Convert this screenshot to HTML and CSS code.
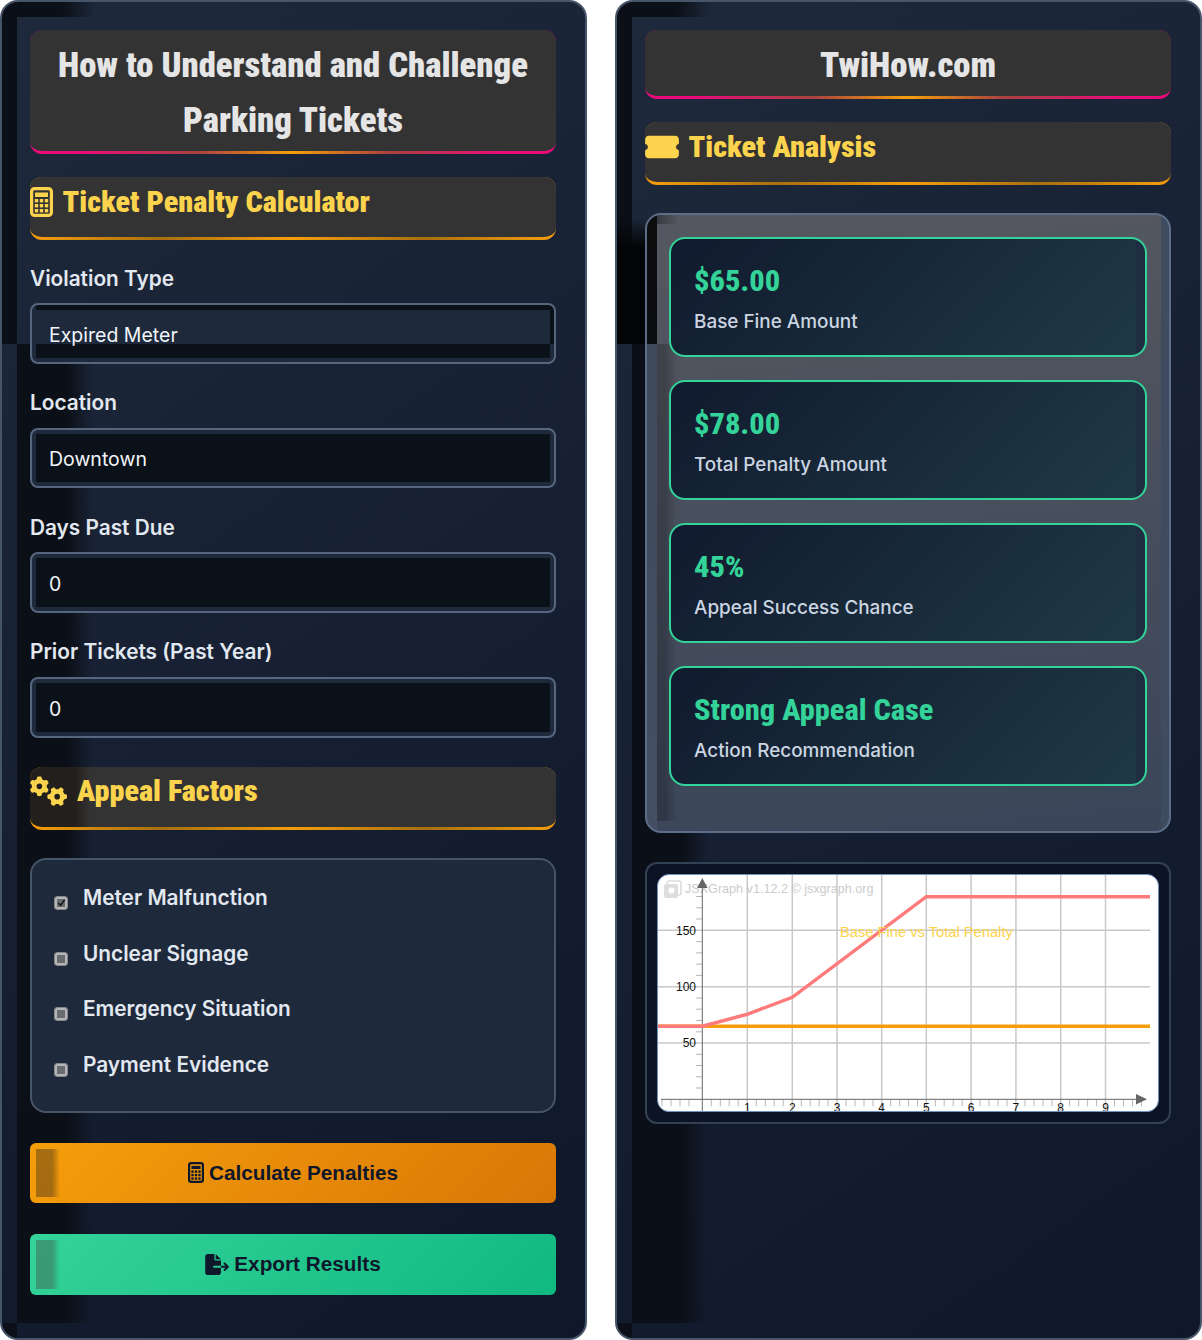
FILE: index.html
```html
<!DOCTYPE html>
<html lang="en">
<head>
<meta charset="utf-8">
<title>How to Understand and Challenge Parking Tickets</title>
<link rel="stylesheet" href="styles.css">
</head>
<body>
<main class="layout">
  <section class="panel">
    <h1 class="title">How to Understand and Challenge Parking Tickets</h1>
    <h2 class="heading">
      <svg class="ico-calc" viewBox="0 0 23 30"><rect x="1.6" y="1.6" width="19.8" height="26.8" rx="3" fill="none" stroke="currentColor" stroke-width="3.2"/><rect x="5" y="5.5" width="13" height="4.5" fill="currentColor"/><g fill="currentColor"><rect x="4.8" y="12" width="3.4" height="3.4"/><rect x="9.8" y="12" width="3.4" height="3.4"/><rect x="14.8" y="12" width="3.4" height="3.4"/><rect x="4.8" y="17" width="3.4" height="3.4"/><rect x="9.8" y="17" width="3.4" height="3.4"/><rect x="14.8" y="17" width="3.4" height="3.4"/><rect x="4.8" y="22" width="3.4" height="3.4"/><rect x="9.8" y="22" width="3.4" height="3.4"/><rect x="14.8" y="22" width="3.4" height="3.4"/></g></svg>
      <span>Ticket Penalty Calculator</span>
    </h2>
    <label class="label first">Violation Type</label>
    <select class="control control-split"><option>Expired Meter</option></select>
    <label class="label">Location</label>
    <select class="control"><option>Downtown</option></select>
    <label class="label">Days Past Due</label>
    <input class="control" value="0">
    <label class="label">Prior Tickets (Past Year)</label>
    <input class="control" value="0">
    <h2 class="heading heading-shaded">
      <svg class="ico-cogs" viewBox="0 0 640 512"><path fill="currentColor" d="M308.5 135.3c7.1-6.3 9.9-16.2 6.2-25c-2.3-5.3-4.8-10.5-7.6-15.5L304 89.4c-3-5-6.3-9.9-9.8-14.6c-5.7-7.6-15.7-10.1-24.7-7.1l-28.2 9.3c-10.7-8.8-23-16-36.2-20.9L199 27.1c-1.9-9.3-9.1-16.7-18.5-17.8C173.9 8.4 167.2 8 160.4 8h-.7c-6.8 0-13.5 .4-20.1 1.2c-9.4 1.1-16.6 8.6-18.5 17.8L115 56.1c-13.3 5-25.5 12.1-36.2 20.9L50.5 67.8c-9-3-19-.5-24.7 7.1c-3.5 4.7-6.8 9.6-9.9 14.6l-3 5.3c-2.8 5-5.3 10.2-7.6 15.6c-3.7 8.7-.9 18.6 6.2 25l22.2 19.8C32.6 161.9 32 168.9 32 176s.6 14.1 1.7 20.9L11.5 216.7c-7.1 6.3-9.9 16.2-6.2 25c2.3 5.3 4.8 10.5 7.6 15.6l3 5.2c3 5.1 6.3 9.9 9.9 14.6c5.7 7.6 15.7 10.1 24.7 7.1l28.2-9.3c10.7 8.8 23 16 36.2 20.9l6.1 29.1c1.9 9.3 9.1 16.7 18.5 17.8c6.7 .8 13.5 1.2 20.4 1.2s13.7-.4 20.4-1.2c9.4-1.1 16.6-8.6 18.5-17.8l6.1-29.1c13.3-5 25.5-12.1 36.2-20.9l28.2 9.3c9 3 19 .5 24.7-7.1c3.5-4.7 6.8-9.5 9.8-14.6l3.1-5.4c2.8-5 5.3-10.2 7.6-15.5c3.7-8.7 .9-18.6-6.2-25l-22.2-19.8c1.1-6.8 1.7-13.8 1.7-20.9s-.6-14.1-1.7-20.9l22.2-19.8zM112 176a48 48 0 1 1 96 0 48 48 0 1 1 -96 0zM504.7 500.5c6.3 7.1 16.2 9.9 25 6.2c5.3-2.3 10.5-4.8 15.5-7.6l5.4-3.1c5-3 9.9-6.3 14.6-9.8c7.6-5.7 10.1-15.7 7.1-24.7l-9.3-28.2c8.8-10.7 16-23 20.9-36.2l29.1-6.1c9.3-1.9 16.7-9.1 17.8-18.5c.8-6.7 1.2-13.5 1.2-20.4s-.4-13.7-1.2-20.4c-1.1-9.4-8.6-16.6-17.8-18.5L583.9 307c-5-13.3-12.1-25.5-20.9-36.2l9.3-28.2c3-9 .5-19-7.1-24.7c-4.7-3.5-9.6-6.8-14.6-9.9l-5.3-3c-5-2.8-10.2-5.3-15.6-7.6c-8.7-3.7-18.6-.9-25 6.2l-19.8 22.2c-6.8-1.1-13.8-1.7-20.9-1.7s-14.1 .6-20.9 1.7l-19.8-22.2c-6.3-7.1-16.2-9.9-25-6.2c-5.3 2.3-10.5 4.8-15.6 7.6l-5.2 3c-5.1 3-9.9 6.3-14.6 9.9c-7.6 5.7-10.1 15.7-7.1 24.7l9.3 28.2c-8.8 10.7-16 23-20.9 36.2L315.1 313c-9.3 1.9-16.7 9.1-17.8 18.5c-.8 6.7-1.2 13.5-1.2 20.4s.4 13.7 1.2 20.4c1.1 9.4 8.6 16.6 17.8 18.5l29.1 6.1c5 13.3 12.1 25.5 20.9 36.2l-9.3 28.2c-3 9-.5 19 7.1 24.7c4.7 3.5 9.5 6.8 14.6 9.8l5.4 3.1c5 2.8 10.2 5.3 15.5 7.6c8.7 3.7 18.6 .9 25-6.2l19.8-22.2c6.8 1.1 13.8 1.7 20.9 1.7s14.1-.6 20.9-1.7l19.8 22.2zM464 304a48 48 0 1 1 0 96 48 48 0 1 1 0-96z"/></svg>
      <span>Appeal Factors</span>
    </h2>
    <div class="factors">
      <label class="factor"><span class="check"><svg viewBox="0 0 10 10"><path d="M1.5 5.5 4 8 8.5 2" fill="none" stroke="#1a1a1a" stroke-width="1.8"/></svg></span>Meter Malfunction</label>
      <label class="factor"><span class="check"></span>Unclear Signage</label>
      <label class="factor"><span class="check"></span>Emergency Situation</label>
      <label class="factor"><span class="check"></span>Payment Evidence</label>
    </div>
    <button class="btn btn-orange">
      <svg class="ico-btn-calc" viewBox="0 0 23 30"><rect x="1.6" y="1.6" width="19.8" height="26.8" rx="3" fill="none" stroke="currentColor" stroke-width="3.2"/><rect x="5" y="5.5" width="13" height="4.5" fill="currentColor"/><g fill="currentColor"><rect x="4.8" y="12" width="3.4" height="3.4"/><rect x="9.8" y="12" width="3.4" height="3.4"/><rect x="14.8" y="12" width="3.4" height="3.4"/><rect x="4.8" y="17" width="3.4" height="3.4"/><rect x="9.8" y="17" width="3.4" height="3.4"/><rect x="14.8" y="17" width="3.4" height="3.4"/><rect x="4.8" y="22" width="3.4" height="3.4"/><rect x="9.8" y="22" width="3.4" height="3.4"/><rect x="14.8" y="22" width="3.4" height="3.4"/></g></svg>
      Calculate Penalties
    </button>
    <button class="btn btn-green">
      <svg class="ico-export" viewBox="0 0 576 512"><path fill="currentColor" d="M0 64C0 28.7 28.7 0 64 0H224V128c0 17.7 14.3 32 32 32H384V288H216c-13.3 0-24 10.7-24 24s10.7 24 24 24H384V448c0 35.3-28.7 64-64 64H64c-35.3 0-64-28.7-64-64V64zM384 336V288H494.1l-39-39c-9.4-9.4-9.4-24.6 0-33.9s24.6-9.4 33.9 0l80 80c9.4 9.4 9.4 24.6 0 33.9l-80 80c-9.4 9.4-24.6 9.4-33.9 0s-9.4-24.6 0-33.9l39-39H384zm0-208H256V0L384 128z"/></svg>
      Export Results
    </button>
  </section>

  <section class="panel panel-right">
    <h1 class="title">TwiHow.com</h1>
    <h2 class="heading">
      <svg class="ico-ticket" viewBox="0 0 576 512"><path fill="currentColor" d="M64 64C28.7 64 0 92.7 0 128v64c0 8.8 7.4 15.7 15.7 18.6C34.5 217.1 48 235 48 256s-13.5 38.9-32.3 45.4C7.4 304.3 0 311.2 0 320v64c0 35.3 28.7 64 64 64H512c35.3 0 64-28.7 64-64V320c0-8.8-7.4-15.7-15.7-18.6C541.5 294.9 528 277 528 256s13.5-38.9 32.3-45.4c8.3-2.9 15.7-9.8 15.7-18.6V128c0-35.3-28.7-64-64-64H64z"/></svg>
      <span>Ticket Analysis</span>
    </h2>
    <div class="results">
      <article class="result"><div class="value">$65.00</div><div class="caption">Base Fine Amount</div></article>
      <article class="result"><div class="value">$78.00</div><div class="caption">Total Penalty Amount</div></article>
      <article class="result"><div class="value">45%</div><div class="caption">Appeal Success Chance</div></article>
      <article class="result"><div class="value">Strong Appeal Case</div><div class="caption">Action Recommendation</div></article>
    </div>
    <div class="chart">
      <svg class="board" viewBox="1 1 500 236">
        <g class="wm"><rect x="10" y="7" width="14" height="14" rx="2" fill="none" stroke="#ddd" stroke-width="1.6"/><rect x="7" y="10" width="14" height="14" rx="2" fill="#ddd"/><circle cx="14.5" cy="16.5" r="3" fill="#fff"/><text x="28" y="19">JSXGraph v1.12.2 © jsxgraph.org</text></g>
        <g class="grid">
          <path d="M0 56.3H493M0 112.7H493M0 169H493"/>
          <path d="M90.3 0V238M135.3 0V238M180 0V238M224.7 0V238M269.3 0V238M314.1 0V238M358.9 0V238M403.7 0V238M448.5 0V238"/>
        </g>
        <g class="ticks">
          <path d="M39 22.5h6M39 33.8h6M39 45h6M39 67.6h6M39 78.9h6M39 90.2h6M39 101.4h6M39 124h6M39 135.2h6M39 146.5h6M39 157.8h6M39 180.3h6M39 191.5h6M39 202.8h6M39 214h6"/>
          <path d="M5 225.3v7M14 225.3v7M23 225.3v7M32 225.3v7M54.3 225.3v7M63.3 225.3v7M72.2 225.3v7M81.2 225.3v7M99.3 225.3v7M108.3 225.3v7M117.2 225.3v7M126.2 225.3v7M144.3 225.3v7M153.2 225.3v7M162.2 225.3v7M171 225.3v7M189 225.3v7M198 225.3v7M207 225.3v7M216 225.3v7M233.7 225.3v7M242.7 225.3v7M251.6 225.3v7M260.6 225.3v7M278.3 225.3v7M287.2 225.3v7M296.2 225.3v7M305.2 225.3v7M323 225.3v7M332 225.3v7M341 225.3v7M350 225.3v7M368 225.3v7M377 225.3v7M386 225.3v7M395 225.3v7M412.7 225.3v7M421.7 225.3v7M430.6 225.3v7M439.6 225.3v7M457.5 225.3v7M466.5 225.3v7M475.5 225.3v7M484.5 225.3v7"/>
        </g>
        <g class="axes">
          <path d="M4 225.3H482M45.3 238V12"/>
          <path class="arrow" d="M490 225.3 479 220V230.6ZM45.3 4 40 14H50.6Z"/>
        </g>
        <path class="line-base" d="M0 152.3H493"/>
        <path class="line-total" d="M0 152.3H45.3L90.3 140.3 135.3 123.3 269.3 22.7H493"/>
        <text class="chart-title" x="183" y="63">Base Fine vs Total Penalty</text>
        <g class="num">
          <text x="39" y="60.5" text-anchor="end">150</text><text x="39" y="117" text-anchor="end">100</text><text x="39" y="173.3" text-anchor="end">50</text>
          <text x="90.3" y="238" text-anchor="middle">1</text><text x="135.3" y="238" text-anchor="middle">2</text><text x="180" y="238" text-anchor="middle">3</text><text x="224.7" y="238" text-anchor="middle">4</text><text x="269.3" y="238" text-anchor="middle">5</text><text x="314.1" y="238" text-anchor="middle">6</text><text x="358.9" y="238" text-anchor="middle">7</text><text x="403.7" y="238" text-anchor="middle">8</text><text x="448.5" y="238" text-anchor="middle">9</text>
        </g>
      </svg>
    </div>
  </section>
</main>
</body>
</html>
```
FILE: styles.css
```css
* { box-sizing: border-box; }
html, body { margin: 0; padding: 0; background: #fff; }
body { font-family: "Inter", "Liberation Sans", sans-serif; }

.layout {
  display: grid;
  grid-template-columns: 587px 587px;
  column-gap: 28px;
  width: 1202px;
  height: 1340px;
}

.panel {
  --shade: #0b1018;
  padding: 28px 29px 28px 28px;
  border: 2px solid #475569;
  border-radius: 18px;
  background:
    linear-gradient(var(--shade), var(--shade)) 0 0 / 15px 342px no-repeat,
    linear-gradient(90deg, var(--shade) 45px, transparent 78px) 15px 0 / 80px 15px no-repeat,
    linear-gradient(90deg, var(--shade) 50px, transparent 76px) 15px 342px / 80px calc(100% - 357px) no-repeat,
    linear-gradient(var(--shade), var(--shade)) 0 100% / 15px 15px no-repeat,
    linear-gradient(145deg, #1e293b, #0f172a);
}
.panel-right {
  background:
    linear-gradient(180deg, transparent, #030406 30px) 0 216px / 28px 126px no-repeat,
    linear-gradient(var(--shade), var(--shade)) 0 0 / 15px 342px no-repeat,
    linear-gradient(90deg, var(--shade) 45px, transparent 78px) 15px 0 / 80px 15px no-repeat,
    linear-gradient(90deg, var(--shade) 50px, transparent 76px) 15px 342px / 80px calc(100% - 357px) no-repeat,
    linear-gradient(var(--shade), var(--shade)) 0 100% / 15px 15px no-repeat,
    linear-gradient(145deg, #1e293b, #0f172a);
}

.title, .heading, .value {
  font-family: "Roboto", "Liberation Sans", sans-serif;
  font-stretch: 75%;
  font-weight: 900;
}

.title {
  margin: 0 0 23px;
  padding: 8px 20px 3px;
  border-bottom: 3px solid transparent;
  border-radius: 12px;
  background:
    linear-gradient(#333, #333) padding-box,
    linear-gradient(90deg, #ec0a7a 10%, #a8433f 32%, #f59e0b 50%, #a8433f 68%, #ec0a7a 90%) border-box;
  color: #e5e5e5;
  font-size: 34.7px;
  line-height: 55px;
  text-align: center;
}

.heading {
  display: flex;
  align-items: center;
  gap: 9.5px;
  height: 63px;
  margin: 0;
  padding-bottom: 11px;
  border-bottom: 3px solid transparent;
  border-radius: 12px;
  background:
    linear-gradient(#333, #333) padding-box,
    linear-gradient(90deg, #f59e0b, #a8700f 25%, #f59e0b 50%, #a8700f 75%, #f59e0b) border-box;
  color: #fcd34d;
  font-size: 30.2px;
  line-height: 48px;
}
.heading-shaded {
  margin-top: 29.33px;
  background:
    linear-gradient(90deg, #231f1c 45px, #333 60px) padding-box,
    linear-gradient(90deg, #f59e0b, #a8700f 25%, #f59e0b 50%, #a8700f 75%, #f59e0b) border-box;
}

.ico-calc { width: 23px; height: 30px; flex: none; }
.ico-cogs { width: 37.5px; height: 30px; flex: none; }
.ico-ticket { width: 34px; height: 30px; flex: none; }

.label {
  display: block;
  margin: 24.5px 0 9.5px;
  color: #e2e8f0;
  font-size: 20.8px;
  font-weight: 600;
  line-height: 30px;
}
.label.first { margin-top: 23.5px; }

.control {
  --ring: #1e293b;
  --core: #0b1118;
  display: block;
  width: 100%;
  height: 60.67px;
  padding: 3px 17px 0;
  border: 2px solid #56667f;
  border-radius: 8px;
  appearance: none;
  outline: none;
  background:
    linear-gradient(var(--core), var(--core)) 4px 4px / calc(100% - 8px) calc(100% - 8px) no-repeat,
    var(--ring);
  color: #f1f5f9;
  font-family: "Inter", "Liberation Sans", sans-serif;
  font-size: 19.5px;
  line-height: 30px;
}
.control-split {
  background:
    linear-gradient(#0b1118, #0b1118) 4px 0 / 100% 5px no-repeat,
    linear-gradient(#0b1118, #0b1118) 100% 0 / 4px 39px no-repeat,
    linear-gradient(#1e293b 39px, #0b1118 39px, #0b1118 calc(100% - 4px), #1e293b calc(100% - 4px)) 4px 0 / calc(100% - 8px) 100% no-repeat,
    #1e293b;
}

.factors {
  display: flex;
  flex-direction: column;
  gap: 19.6px;
  height: 255px;
  margin-top: 28px;
  padding: 20px 22px;
  border: 2px solid #475569;
  border-radius: 16px;
  background: #1e293b;
}
.factor {
  display: flex;
  align-items: center;
  gap: 15px;
  color: #e2e8f0;
  font-size: 20.8px;
  font-weight: 600;
  line-height: 36px;
}
.check {
  display: flex;
  align-items: center;
  justify-content: center;
  width: 14px;
  height: 14px;
  margin-top: 10px;
  border: 1px solid #85878a;
  border-radius: 3px;
  background: #696b6f;
  box-shadow: inset 0 0 0 2px #b4b5b7;
}
.check svg { width: 9px; height: 9px; }

.btn {
  display: flex;
  align-items: center;
  justify-content: center;
  gap: 5px;
  width: 100%;
  padding: 0;
  border: 0;
  border-radius: 6px;
  color: #0f172a;
  font-family: "Liberation Sans", Arial, sans-serif;
  font-size: 20.75px;
  font-weight: 700;
}
.btn-orange {
  height: 60px;
  margin-top: 30px;
  background:
    linear-gradient(90deg, rgba(70,50,25,.45) 16px, transparent 24px) 6px 6px / 26px calc(100% - 12px) no-repeat,
    linear-gradient(135deg, #f59e0b, #d97706);
}
.btn-green {
  height: 61px;
  margin-top: 31px;
  background:
    linear-gradient(90deg, rgba(70,70,70,.4) 16px, transparent 24px) 6px 6px / 26px calc(100% - 12px) no-repeat,
    linear-gradient(135deg, #34d399, #10b981);
}
.ico-btn-calc { width: 16px; height: 21px; flex: none; }
.ico-export { width: 24px; height: 21px; flex: none; }

.results {
  display: flex;
  flex-direction: column;
  gap: 23px;
  height: 620px;
  margin-top: 28px;
  padding: 22px;
  border: 2px solid #5b6d87;
  border-radius: 16px;
  background:
    linear-gradient(rgba(0,0,0,.85), rgba(0,0,0,.85)) 0 0 / 10px 129px no-repeat,
    linear-gradient(90deg, rgba(0,0,0,.35), transparent) 10px 0 / 22px 9px no-repeat,
    linear-gradient(90deg, rgba(0,0,0,.22) 8px, transparent 20px) 10px 129px / 22px calc(100% - 139px) no-repeat,
    linear-gradient(#3f4c60, #3f4c60) 100% 0 / 8px 100% no-repeat,
    linear-gradient(#3f4a5c, #465066) 0 129px / 10px 100% no-repeat,
    linear-gradient(175deg, #555860, #3a4559);
}
.result {
  height: 120px;
  padding: 22px 23px;
  border: 2px solid #34d399;
  border-radius: 16px;
  background:
    linear-gradient(#1e2d40, #1e2d40) 100% 0 / 9px 100% no-repeat,
    linear-gradient(135deg, #111a2e, #1f3a45);
}
.value {
  color: #34d399;
  font-size: 30.4px;
  font-weight: 800;
  line-height: 40px;
}
.caption {
  margin-top: 7px;
  color: #cbd5e1;
  font-size: 18.9px;
  font-weight: 500;
  line-height: 28px;
}

.chart {
  height: 262px;
  margin-top: 29px;
  padding: 10px;
  border: 2px solid #334155;
  border-radius: 12px;
  background: #0b1324;
}
.board {
  display: block;
  width: 502px;
  height: 238px;
  border: 1px solid #6f93bd;
  border-radius: 12px;
  background: #fff;
  font-family: "Liberation Sans", Arial, sans-serif;
}
.wm text { fill: #ccc; font-size: 12.6px; }
.grid path { fill: none; stroke: #c8c8c8; stroke-width: 1.5; }
.ticks path { fill: none; stroke: #b8b8b8; stroke-width: 1; }
.axes path { fill: none; stroke: #666; stroke-width: 1; }
.axes .arrow { fill: #666; stroke: none; }
.line-base { fill: none; stroke: #f59e0b; stroke-width: 3.5; }
.line-total { fill: none; stroke: #ff7b7b; stroke-width: 3.5; }
.chart-title { fill: #fcd34d; font-size: 14.7px; }
.num text { fill: #111; font-size: 12px; }
```
